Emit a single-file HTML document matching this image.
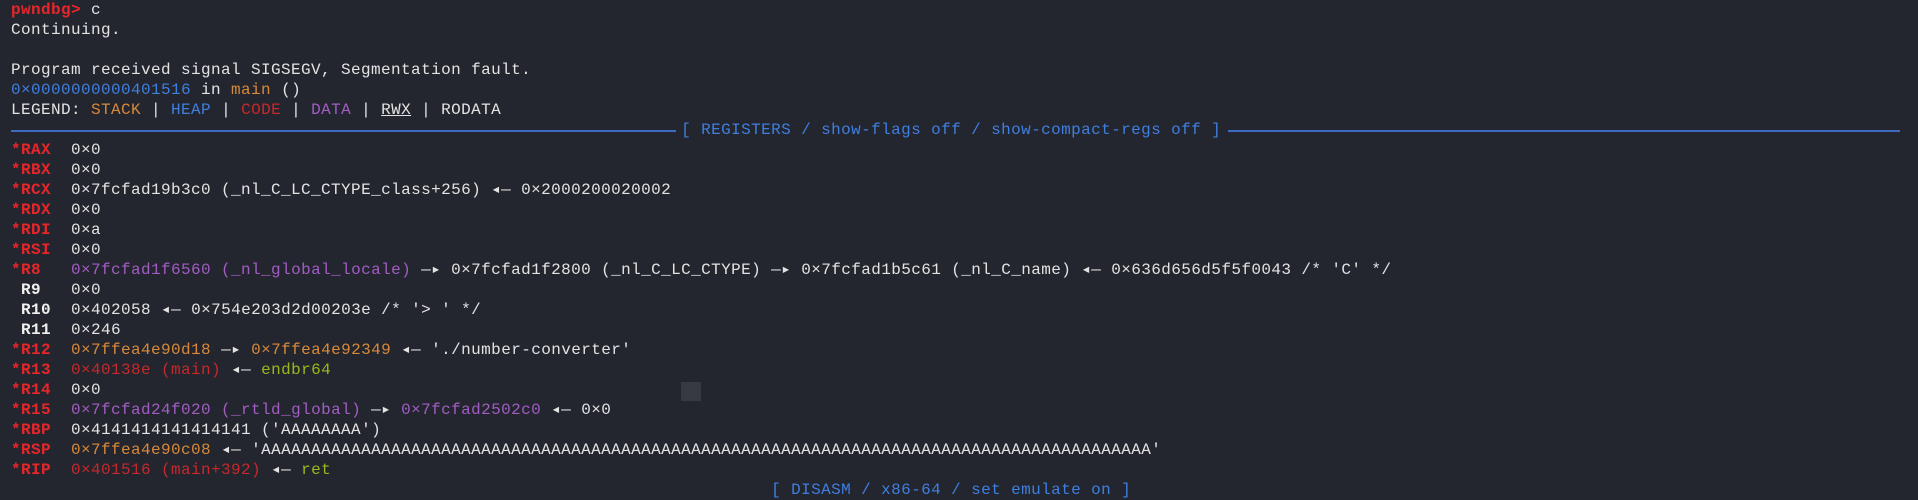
<!DOCTYPE html>
<html><head><meta charset="utf-8"><style>
html,body{margin:0;padding:0;background:#23262e;width:1918px;height:487px;overflow:hidden}
pre{margin:0;position:absolute;left:11px;top:0;font-family:"Liberation Mono","DejaVu Sans Mono",monospace;font-size:16px;line-height:20px;color:#e3e3e3;letter-spacing:0.4px;white-space:pre}
.r{color:#e8262a;font-weight:bold}.w{color:#f0f0f0;font-weight:bold}
.p{color:#a35cc4}.o{color:#d8893a}.b{color:#3f7fe0}.c{color:#c8282c}.g{color:#9ab81a}.pr{color:#e8262a;font-weight:bold}
.u{text-decoration:underline}
.line{position:absolute;height:2px;background:#3e6cc4;top:130px}
.sq{position:absolute;left:681px;top:382px;width:20px;height:19px;background:#373a42}
</style></head><body>
<div class="sq"></div>
<div class="line" style="left:11px;width:665px"></div>
<div class="line" style="left:1228px;width:672px"></div>
<pre><span class="pr">pwndbg&gt;</span> c
Continuing.

Program received signal SIGSEGV, Segmentation fault.
<span class="b">0×0000000000401516</span> in <span class="o">main</span> ()
LEGEND: <span class="o">STACK</span> | <span class="b">HEAP</span> | <span class="c">CODE</span> | <span class="p">DATA</span> | <span class="u">RWX</span> | RODATA
<span class="b">                                                                   [ REGISTERS / show-flags off / show-compact-regs off ]</span>
<span class="r">*RAX</span>  0×0
<span class="r">*RBX</span>  0×0
<span class="r">*RCX</span>  0×7fcfad19b3c0 (_nl_C_LC_CTYPE_class+256) ◂— 0×2000200020002
<span class="r">*RDX</span>  0×0
<span class="r">*RDI</span>  0×a
<span class="r">*RSI</span>  0×0
<span class="r">*R8 </span>  <span class="p">0×7fcfad1f6560 (_nl_global_locale)</span> —▸ 0×7fcfad1f2800 (_nl_C_LC_CTYPE) —▸ 0×7fcfad1b5c61 (_nl_C_name) ◂— 0×636d656d5f5f0043 /* 'C' */
<span class="w"> R9 </span>  0×0
<span class="w"> R10</span>  0×402058 ◂— 0×754e203d2d00203e /* '&gt; ' */
<span class="w"> R11</span>  0×246
<span class="r">*R12</span>  <span class="o">0×7ffea4e90d18</span> —▸ <span class="o">0×7ffea4e92349</span> ◂— './number-converter'
<span class="r">*R13</span>  <span class="c">0×40138e (main)</span> ◂— <span class="g">endbr64</span>
<span class="r">*R14</span>  0×0
<span class="r">*R15</span>  <span class="p">0×7fcfad24f020 (_rtld_global)</span> —▸ <span class="p">0×7fcfad2502c0</span> ◂— 0×0
<span class="r">*RBP</span>  0×4141414141414141 ('AAAAAAAA')
<span class="r">*RSP</span>  <span class="o">0×7ffea4e90c08</span> ◂— 'AAAAAAAAAAAAAAAAAAAAAAAAAAAAAAAAAAAAAAAAAAAAAAAAAAAAAAAAAAAAAAAAAAAAAAAAAAAAAAAAAAAAAAAAA'
<span class="r">*RIP</span>  <span class="c">0×401516 (main+392)</span> ◂— <span class="g">ret</span>
<span class="b">                                                                            [ DISASM / x86-64 / set emulate on ]</span>
</pre>
</body></html>
